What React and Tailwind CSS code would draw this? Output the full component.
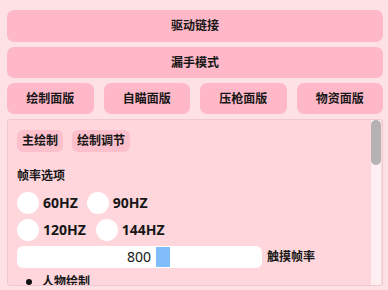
const font = { fontFamily: '"Noto Sans", "Noto Sans CJK SC", sans-serif' };

function Radio({ label }) {
  return (
    <div className="flex items-center gap-[4px]">
      <div className="w-[22px] h-[22px] rounded-full bg-white" />
      <span className="text-[14px] font-bold leading-none">{label}</span>
    </div>
  );
}

export default function App() {
  return (
    <div
      className="w-[388px] h-[290px] overflow-hidden bg-[#fde1e5] pt-[10px] pl-[7px] pr-[5px] text-[#161616]"
      style={font}
    >
      <div className="flex flex-col gap-[5px]">
        <button className="h-[32px] rounded-[7px] bg-[#ffb8c8] text-[12px] font-bold">驱动链接</button>
        <button className="h-[31px] rounded-[7px] bg-[#ffb8c8] text-[12px] font-bold">漏手模式</button>
        <div className="grid grid-cols-4 gap-[10px]">
          {['绘制面版', '自瞄面版', '压枪面版', '物资面版'].map((t) => (
            <button key={t} className="h-[31px] rounded-[7px] bg-[#ffb8c8] text-[12px] font-bold">
              {t}
            </button>
          ))}
        </div>

        {/* Panel */}
        <div className="relative h-[167px] border border-[#efc9cf] rounded-[3px] bg-[#fed6dc] overflow-hidden">
          <div className="pl-[9px] pt-[10px]">
            <div className="flex gap-[9px]">
              <div className="h-[22px] px-[5px] rounded-[6px] bg-[#fcbfcc] text-[12px] font-bold flex items-center">主绘制</div>
              <div className="h-[22px] px-[5px] rounded-[6px] bg-[#fcbfcc] text-[12px] font-bold flex items-center">绘制调节</div>
            </div>
            <div className="mt-[18px] text-[12px] font-bold leading-none">帧率选项</div>
            <div className="mt-[10px] flex gap-[9px]">
              <Radio label="60HZ" />
              <Radio label="90HZ" />
            </div>
            <div className="mt-[5px] flex gap-[10px]">
              <Radio label="120HZ" />
              <Radio label="144HZ" />
            </div>
            <div className="mt-[5px] flex items-center gap-[5px]">
              <div className="w-[245px] h-[22px] rounded-[6px] bg-white flex items-center pl-[110px] gap-[5px]">
                <span className="text-[14px] leading-none">800</span>
                <div className="w-[14px] h-[20px] bg-[#80bdfa]" />
              </div>
              <span className="text-[12px] font-bold">触摸帧率</span>
            </div>
            <div className="mt-[5px] flex items-center pl-[9px] gap-[10px]">
              <div className="w-[6px] h-[6px] rounded-full bg-[#111]" />
              <span className="text-[12px] font-bold">人物绘制</span>
            </div>
          </div>

          {/* Scrollbar */}
          <div className="absolute top-0 right-[1px] w-[10px] h-full bg-[#fdeef1]">
            <div className="w-[10px] h-[45px] rounded-[5px] bg-[#b6b1b2]" />
          </div>
        </div>
      </div>
    </div>
  );
}
